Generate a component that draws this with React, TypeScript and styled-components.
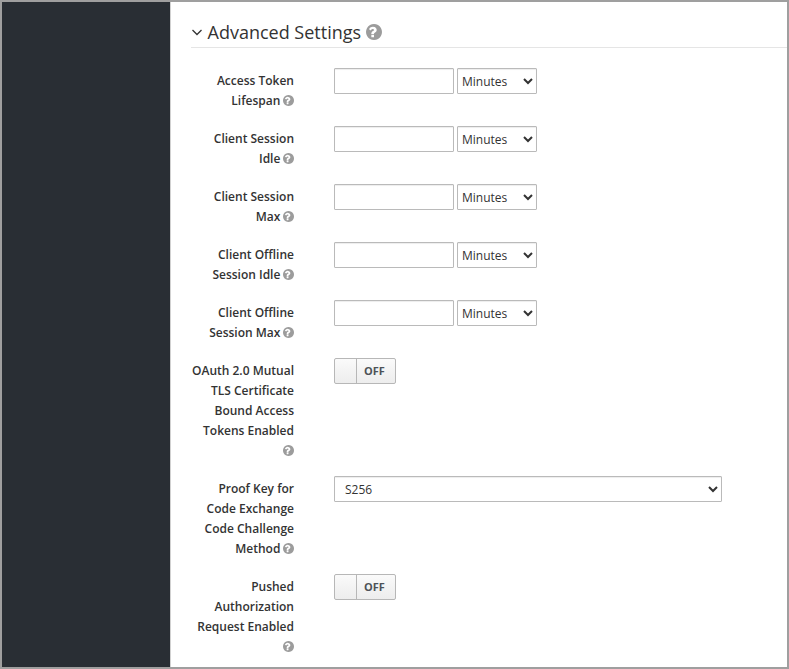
import React from "react";
import styled, { createGlobalStyle } from "styled-components";

const GlobalStyle = createGlobalStyle`
  *, *::before, *::after { box-sizing: border-box; }
  body {
    margin: 0;
    background: #fff;
    color: #333;
    font: 12px/20px "Open Sans", Arial, sans-serif;
    overflow: hidden;
  }
`;

const Frame = styled.div`
  display: flex;
  width: 789px;
  height: 669px;
  border: 2px solid #9f9f9f;
  overflow: hidden;
`;

const Sidebar = styled.aside`
  flex: 0 0 169px;
  background: #292e34;
  border-right: 1px solid #d1d1d1;
`;

const Content = styled.main`
  flex: 1;
  min-width: 0;
  padding: 17px 0 0 20px;
`;

const Legend = styled.h2`
  display: flex;
  align-items: center;
  height: 29px;
  margin: 0 0 20px;
  padding-bottom: 2px;
  border-bottom: 1px solid #e5e5e5;
  color: #333;
  font-size: 18px;
  font-weight: 400;
  line-height: 26px;
`;

const Toggle = styled.svg`
  width: 10px;
  height: 7px;
  margin: 1px 5.5px 0 1px;
`;

const HelpSvg = styled.svg<{ $large: boolean }>`
  width: ${(p) => (p.$large ? 16 : 11)}px;
  height: ${(p) => (p.$large ? 16 : 11)}px;
  fill: #9c9c9c;
  vertical-align: -1px;
  margin: ${(p) => (p.$large ? "0 0 0 4.7px" : "0 0 0 -0.5px")};
`;

const Row = styled.div`
  display: flex;
  align-items: flex-start;
  margin-bottom: 15px;
`;

const Label = styled.label`
  width: 103px;
  padding-top: 3px;
  margin-right: 40px;
  text-align: right;
  font-weight: 600;
`;

const Controls = styled.div`
  display: flex;
  gap: 3px;
`;

const Input = styled.input`
  width: 120px;
  height: 26px;
  padding: 2px 6px;
  border: 1px solid #bababa;
  border-radius: 1px;
  box-shadow: inset 0 1px 1px rgba(3, 3, 3, 0.075);
  font: inherit;
`;

const Select = styled.select<{ $wide?: boolean }>`
  width: ${(p) => (p.$wide ? 388 : 80)}px;
  height: 26px;
  padding: ${(p) => (p.$wide ? "2px 0 2px 6px" : "2px 0")};
  border: 1px solid #bababa;
  border-radius: 1px;
  background-color: #fff;
  box-shadow: inset 0 1px 1px rgba(3, 3, 3, 0.075);
  color: #333;
  font: inherit;
`;

const Switch = styled.button`
  display: flex;
  width: 62px;
  height: 26px;
  padding: 0;
  border: 1px solid #b7b7b7;
  border-radius: 2px;
  background: linear-gradient(#fafafa, #ededed);
  color: #4d5258;
  font: 700 11px/24px "Open Sans", Arial, sans-serif;
`;

const Knob = styled.span`
  width: 22px;
  height: 24px;
  border-right: 1px solid #b7b7b7;
`;

const SwitchText = styled.span`
  flex: 1;
  text-align: center;
  padding-right: 3px;
`;

const Help = ({ large = false }: { large?: boolean }) => (
  <HelpSvg $large={large} viewBox="128 128 1536 1536" aria-label="Help">
    <path d="M896 1376v-192q0-14-9-23t-23-9h-192q-14 0-23 9t-9 23v192q0 14 9 23t23 9h192q14 0 23-9t9-23zm256-672q0-88-55.500-163t-138.500-116-170-41q-243 0-371 213-15 24 8 42l132 100q7 6 19 6 16 0 25-12 53-68 86-92 34-24 86-24 48 0 85.500 26t37.500 59q0 38-20 61t-68 45q-63 28-115.500 86.500t-52.500 125.500v36q0 14 9 23t23 9h192q14 0 23-9t9-23q0-19 21.500-49.500t54.500-49.500q32-18 49-28.500t46-35 44.500-48 28-60.500 12.500-81zm512 192q0 209-103 385.500t-279.500 279.500-385.500 103-385.500-103-279.500-279.500-103-385.500 103-385.500 279.500-279.500 385.500-103 385.500 103 279.500 279.500 103 385.500z" />
  </HelpSvg>
);

const Field = ({ label, children }: { label: string; children: React.ReactNode }) => (
  <Row>
    <Label>
      {label} <Help />
    </Label>
    <Controls>{children}</Controls>
  </Row>
);

const OffSwitch = () => (
  <Switch type="button" role="switch" aria-checked={false}>
    <Knob />
    <SwitchText>OFF</SwitchText>
  </Switch>
);

const durations = [
  "Access Token Lifespan",
  "Client Session Idle",
  "Client Session Max",
  "Client Offline Session Idle",
  "Client Offline Session Max",
];

export default function App() {
  return (
    <>
      <GlobalStyle />
      <Frame>
        <Sidebar />
        <Content>
          <Legend>
            <Toggle viewBox="0 0 10 7">
              <path d="M0.5 1 5 5.5 9.5 1" fill="none" stroke="#333" strokeWidth="1.3" />
            </Toggle>
            Advanced Settings
            <Help large />
          </Legend>
          {durations.map((label) => (
            <Field key={label} label={label}>
              <Input type="text" />
              <Select defaultValue="Minutes">
                <option>Minutes</option>
                <option>Hours</option>
                <option>Days</option>
              </Select>
            </Field>
          ))}
          <Field label="OAuth 2.0 Mutual TLS Certificate Bound Access Tokens Enabled">
            <OffSwitch />
          </Field>
          <Field label="Proof Key for Code Exchange Code Challenge Method">
            <Select $wide defaultValue="S256">
              <option>S256</option>
              <option>plain</option>
            </Select>
          </Field>
          <Field label="Pushed Authorization Request Enabled">
            <OffSwitch />
          </Field>
        </Content>
      </Frame>
    </>
  );
}
